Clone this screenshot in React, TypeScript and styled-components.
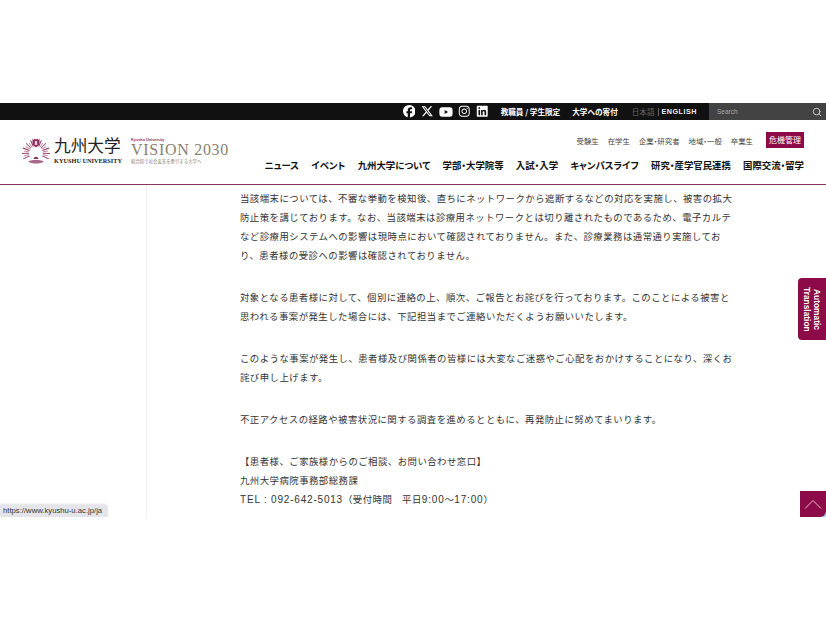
import styled, { createGlobalStyle } from 'styled-components';
import { FaFacebook, FaXTwitter, FaYoutube, FaInstagram, FaLinkedin } from 'react-icons/fa6';
import { Search } from 'lucide-react';

const MAROON = '#8c0a47';
const FONT = `'Noto Sans CJK JP', 'Noto Sans', sans-serif`;

const GlobalStyle = createGlobalStyle`
    html, body {
        margin: 0;
        padding: 0;
        background: #fff;
    }
    body {
        font-family: ${FONT};
    }
`;

const rays = Array.from({ length: 21 }, (_, i) => -115 + i * 11.5);

const Emblem = () => (
    <svg width="28" height="28" viewBox="0 0 28 28">
        {rays.map((r, i) => (
            <line
                key={r}
                x1="14"
                y1="9"
                x2="14"
                y2={i % 2 === 0 ? 2 : 4}
                stroke={i % 2 === 0 ? '#8c2a5c' : '#b9809e'}
                strokeWidth="0.9"
                transform={`rotate(${r} 14 16)`}
            />
        ))}
        <path d="M10.5 1.5l1.2 1.5 1-1.5 1.3 1.5 1.3-1.5 1 1.5 1.2-1.5v6l-3.5 3-3.5-3z" fill="#8c2a5c" />
        <path d="M12.8 4h2.4v4h-2.4z" fill="#e6c8d6" />
        <path d="M6 24.5c2.5-1.2 5-1.5 8-1.5s5.500.3 8 1.500c-2 1.500-5 2-8 2s-6-.5-8-2z" fill="#a8688a" />
        <path d="M11.500 22c.6-1.500 1.500-2.200 2.500-2.200s1.900.7 2.500 2.200z" fill="#8c2a5c" />
    </svg>
);

const App = () => {
    return (
        <Page>
            <GlobalStyle />
            <TopSpace />
            <TopBar>
                <SocialIcons>
                    <FaFacebook size={12.5} />
                    <FaXTwitter size={12.5} />
                    <FaYoutube size={14} />
                    <FaInstagram size={12.5} />
                    <FaLinkedin size={12.5} />
                </SocialIcons>
                <TopLink>教職員 / 学生限定</TopLink>
                <TopLink>大学への寄付</TopLink>
                <LangSwitch>
                    <span>日本語</span>
                    <b>ENGLISH</b>
                </LangSwitch>
                <SearchBox>
                    <span>Search</span>
                    <Search size={10} color="#ddd" />
                </SearchBox>
            </TopBar>
            <Header>
                <LogoArea>
                    <Emblem />
                    <LogoName>
                        <strong>九州大学</strong>
                        <small>KYUSHU UNIVERSITY</small>
                    </LogoName>
                    <Vision>
                        <i>Kyushu University</i>
                        <strong>VISION 2030</strong>
                        <small>総合知で社会変革を牽引する大学へ</small>
                    </Vision>
                </LogoArea>
                <NavArea>
                    <SubNav>
                        <span>受験生</span>
                        <span>在学生</span>
                        <span>企業・研究者</span>
                        <span>地域・一般</span>
                        <span>卒業生</span>
                        <Alert>危機管理</Alert>
                    </SubNav>
                    <MainNav>
                        <span>ニュース</span>
                        <span>イベント</span>
                        <span>九州大学について</span>
                        <span>学部・大学院等</span>
                        <span>入試・入学</span>
                        <span>キャンパスライフ</span>
                        <span>研究・産学官民連携</span>
                        <span>国際交流・留学</span>
                    </MainNav>
                </NavArea>
            </Header>
            <Main>
                <Article>
                    <Paragraph>
                        当該端末については、不審な挙動を検知後、直ちにネットワークから遮断するなどの対応を実施し、被害の拡大
                        <br />
                        防止策を講じております。なお、当該端末は診療用ネットワークとは切り離されたものであるため、電子カルテ
                        <br />
                        など診療用システムへの影響は現時点において確認されておりません。また、診療業務は通常通り実施してお
                        <br />
                        り、患者様の受診への影響は確認されておりません。
                    </Paragraph>
                    <Paragraph>
                        対象となる患者様に対して、個別に連絡の上、順次、ご報告とお詫びを行っております。このことによる被害と
                        <br />
                        思われる事案が発生した場合には、下記担当までご連絡いただくようお願いいたします。
                    </Paragraph>
                    <Paragraph>
                        このような事案が発生し、患者様及び関係者の皆様には大変なご迷惑やご心配をおかけすることになり、深くお
                        <br />
                        詫び申し上げます。
                    </Paragraph>
                    <Paragraph>
                        不正アクセスの経路や被害状況に関する調査を進めるとともに、再発防止に努めてまいります。
                    </Paragraph>
                    <Paragraph>
                        【患者様、ご家族様からのご相談、お問い合わせ窓口】
                        <br />
                        九州大学病院事務部総務課
                        <br />
                        <Latin>TEL : 092-642-5013</Latin>（受付時間　平日<Latin>9:00</Latin>～<Latin>17:00</Latin>）
                    </Paragraph>
                </Article>
                <TranslateTab>
                    Automatic
                    <br />
                    Translation
                </TranslateTab>
                <ScrollTop>
                    <ScrollFace>
                        <svg width="18" height="10" viewBox="0 0 18 10">
                            <path d="M1 9.500 9 1.500l8 8" fill="none" stroke="#e8b8cc" strokeWidth="1" />
                        </svg>
                    </ScrollFace>
                </ScrollTop>
                <StatusUrl>https://www.kyushu-u.ac.jp/ja</StatusUrl>
            </Main>
        </Page>
    );
};

const Page = styled.div`
    width: 826px;
    height: 620px;
    overflow: hidden;
    background: #fff;
`;

const TopSpace = styled.div`
    height: 103px;
`;

const TopBar = styled.div`
    height: 17px;
    background: #111;
    display: flex;
    align-items: center;
    justify-content: flex-end;
    color: #fff;
`;

const SocialIcons = styled.div`
    display: flex;
    align-items: center;
    gap: 5.500px;
    margin-right: 12px;
`;

const TopLink = styled.span`
    font-size: 7.6px;
    font-weight: 700;
    margin-right: 12px;
    white-space: nowrap;
`;

const LangSwitch = styled.div`
    display: flex;
    align-items: center;
    gap: 3px;
    margin: 0 12px 0 2px;
    font-size: 7.6px;
    color: #666;

    b {
        color: #eee;
        font-family: 'Liberation Sans', sans-serif;
        font-size: 7.2px;
        letter-spacing: 0.5px;
        padding-left: 3px;
        border-left: 1px solid #666;
        line-height: 8px;
    }
`;

const SearchBox = styled.div`
    width: 117px;
    height: 17px;
    box-sizing: border-box;
    padding: 0 4px 0 8px;
    background: #434343;
    display: flex;
    align-items: center;
    justify-content: space-between;
    font-family: 'Liberation Sans', sans-serif;
    font-size: 6.5px;
    color: #aaa;
`;

const Header = styled.header`
    height: 64px;
    border-bottom: 1px solid #8a3560;
    display: flex;
    justify-content: space-between;
    background: #fff;
`;

const LogoArea = styled.div`
    display: flex;
    align-items: center;
    padding: 0 0 3px 22px;
    height: 61px;
`;

const LogoName = styled.div`
    display: flex;
    flex-direction: column;
    gap: 3px;
    margin-left: 4px;
    color: #222;

    strong {
        font-size: 16.7px;
        font-weight: 400;
        line-height: 17px;
        white-space: nowrap;
    }

    small {
        font-family: 'Liberation Serif', serif;
        font-size: 6.3px;
        font-weight: 700;
        line-height: 8px;
        white-space: nowrap;
    }
`;

const Vision = styled.div`
    display: flex;
    flex-direction: column;
    margin-left: 9px;
    padding-top: 2px;
    color: #8a7f70;

    i {
        font-family: 'Liberation Sans', sans-serif;
        font-size: 3.8px;
        font-style: normal;
        font-weight: 700;
        line-height: 4px;
        color: #8c2a5c;
    }

    strong {
        font-family: 'Liberation Serif', serif;
        font-size: 16px;
        font-weight: 400;
        letter-spacing: 0.7px;
        line-height: 15px;
        white-space: nowrap;
    }

    small {
        font-size: 4.4px;
        line-height: 8px;
        white-space: nowrap;
    }
`;

const NavArea = styled.div`
    display: flex;
    flex-direction: column;
    align-items: flex-end;
    padding: 12px 22px 0 0;
`;

const SubNav = styled.div`
    height: 16px;
    display: flex;
    align-items: center;
    font-size: 7.4px;
    font-feature-settings: 'palt';
    color: #444;
    white-space: nowrap;

    span {
        margin-right: 9px;
    }
`;

const Alert = styled.div`
    width: 38px;
    height: 16px;
    margin-left: 4px;
    background: ${MAROON};
    color: #fff;
    font-size: 8px;
    line-height: 16px;
    text-align: center;
`;

const MainNav = styled.nav`
    margin-top: 9px;
    display: flex;
    gap: 12.300px;
    font-size: 9.4px;
    font-weight: 700;
    font-feature-settings: 'palt';
    line-height: 16px;
    color: #111;
    white-space: nowrap;
`;

const Main = styled.main`
    position: relative;
    height: 332px;
    box-sizing: border-box;
    padding-left: 146px;
    overflow: hidden;
    background: #fff;
`;

const Article = styled.article`
    height: 100%;
    box-sizing: border-box;
    padding: 4px 0 0 93px;
    border-left: 1px solid #f0f0f0;
`;

const Paragraph = styled.p`
    margin: 0 0 23px;
    font-size: 9.4px;
    letter-spacing: 0.48px;
    line-height: 19px;
    color: #333;
    white-space: nowrap;
`;

const Latin = styled.span`
    font-family: 'Liberation Sans', sans-serif;
    font-size: 10px;
    letter-spacing: 0.8px;
`;

const TranslateTab = styled.div`
    position: absolute;
    top: 93px;
    right: 0;
    width: 28px;
    height: 62px;
    border-radius: 4px 0 0 4px;
    background: ${MAROON};
    color: #fff;
    display: flex;
    align-items: center;
    justify-content: center;
    writing-mode: vertical-rl;
    font-family: 'Liberation Sans', sans-serif;
    font-size: 8.4px;
    font-weight: 700;
    line-height: 10px;
    text-align: center;
`;

const ScrollTop = styled.div`
    position: absolute;
    right: 0;
    bottom: 0;
    width: 26px;
    height: 26px;
    background: #a9d0ee;
`;

const ScrollFace = styled.div`
    width: 100%;
    height: 100%;
    background: ${MAROON};
    border-bottom-right-radius: 6px;
    display: flex;
    align-items: center;
    justify-content: center;
`;

const StatusUrl = styled.div`
    position: absolute;
    left: 0;
    bottom: 0;
    height: 12px;
    padding: 0 5px 0 3px;
    background: #e4e5ea;
    border-radius: 0 3px 0 0;
    box-shadow: 0 0 3px rgba(0, 0, 0, 0.25);
    font-family: 'Liberation Sans', sans-serif;
    font-size: 7.7px;
    line-height: 12px;
    color: #333;
`;

export default App;
